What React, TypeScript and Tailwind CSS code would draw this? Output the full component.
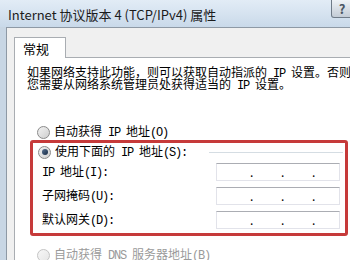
import type { ReactNode } from "react";

const cjk = "font-['Noto_Sans_CJK_SC','Noto_Sans_CJK_JP',sans-serif]";

// Latin runs in the dialog are monospaced half-width glyphs (6px at 12px size)
function M({ children }: { children: ReactNode }) {
  return (
    <span className="font-['Liberation_Mono',monospace] leading-none tracking-[-1.2px]">
      {children}
    </span>
  );
}

function Radio({ checked, disabled }: { checked?: boolean; disabled?: boolean }) {
  return (
    <span
      className={`flex h-[13px] w-[13px] shrink-0 items-center justify-center rounded-full border ${
        disabled
          ? "border-[#c4c4c4] bg-gradient-to-br from-[#f7f7f7] to-[#e6e6e6]"
          : "border-[#8a8a8a] bg-gradient-to-br from-[#f2f2f2] to-[#cfcfcf]"
      }`}
    >
      {checked && (
        <span className="h-[6px] w-[6px] rounded-full bg-gradient-to-br from-[#5a7291] to-[#152a45]" />
      )}
    </span>
  );
}

function IpBox() {
  return (
    <div className="flex h-[18px] w-[124px] items-end border border-[#e2e3ea] border-t-[#abadb3] bg-white pb-[2px] text-[12px] leading-[12px] text-black">
      <span className="w-[33px]" />
      <span className="w-[31px]">.</span>
      <span className="w-[31px]">.</span>
      <span>.</span>
    </div>
  );
}

const fields: { key: string; label: ReactNode }[] = [
  {
    key: "ip",
    label: (
      <>
        <M>IP </M>地址<M>(I):</M>
      </>
    ),
  },
  {
    key: "mask",
    label: (
      <>
        子网掩码<M>(U):</M>
      </>
    ),
  },
  {
    key: "gw",
    label: (
      <>
        默认网关<M>(D):</M>
      </>
    ),
  },
];

export default function App() {
  return (
    <div className={`flex h-[260px] w-[350px] flex-col overflow-hidden bg-[#c8d6e4] ${cjk}`}>
      {/* Title bar */}
      <div className="relative flex h-[27px] shrink-0 items-center bg-gradient-to-b from-[#e2ecf6] via-[#d6e3f0] to-[#c9d9e9] pl-[8px] pt-[2px]">
        <span className="text-[13px] leading-none text-[#1b1b1b]">
          Internet 协议版本 4 (TCP/IPv4) 属性
        </span>
        <div className="absolute right-[-3px] top-0 flex h-[18px] w-[22px] items-center justify-center rounded-b-[3px] border border-t-0 border-[#6f7b88] bg-gradient-to-b from-[#eef2f6] to-[#c3ccd6] text-[13px] font-bold leading-none text-[#4a5563]">
          ?
        </div>
      </div>

      {/* Body */}
      <div className="ml-[6px] flex flex-1 flex-col border-l border-t border-[#8e99a5] bg-[#f0f0f0] pl-[7px] pt-[9px]">
        {/* Tab */}
        <div className="relative z-10 -mb-px flex h-[21px] w-[52px] items-center border border-b-0 border-[#a9adb2] bg-white pl-[8px] text-[13px] leading-none text-black">
          常规
        </div>

        {/* Tab panel */}
        <div className="flex flex-1 flex-col border-l border-t border-[#a9adb2] bg-white pt-[8px] text-[12px] text-black">
          <div className="h-[12px] whitespace-nowrap pl-[12px] leading-[12px]">
            如果网络支持此功能，则可以获取自动指派的<M>{"\u00a0IP\u00a0"}</M>设置。否则
          </div>
          <div className="h-[12px] whitespace-nowrap pl-[12px] leading-[12px]">
            您需要从网络系统管理员处获得适当的<M>{"\u00a0IP\u00a0"}</M>设置。
          </div>

          <div className="ml-[22px] mt-[34px] flex h-[16px] items-center gap-[4px] leading-none">
            <Radio />
            <span>
              自动获得<M> IP </M>地址<M>(O)</M>
            </span>
          </div>

          {/* Red annotation frame */}
          <div className="ml-[15px] flex w-[318px] flex-col rounded-[3px] border-[3px] border-[#c63a3a] pb-[4px] pt-[1px]">
            <div className="flex h-[16px] items-center pl-[5px] leading-none">
              <Radio checked />
              <span className="ml-[4px]">
                使用下面的<M> IP </M>地址<M>(S):</M>
              </span>
              <span className="ml-[22px] mr-[2px] h-px flex-1 bg-[#d5dde3]" />
            </div>
            <div className="mt-[3px] flex flex-col gap-[6px]">
              {fields.map((f) => (
                <div key={f.key} className="flex items-center pl-[9px] leading-none">
                  <span className="w-[174px]">{f.label}</span>
                  <IpBox />
                </div>
              ))}
            </div>
          </div>

          <div className="ml-[22px] mt-[11px] flex h-[16px] items-center gap-[4px] leading-none text-[#9a9a9a]">
            <Radio disabled />
            <span>
              自动获得<M> DNS </M>服务器地址<M>(B)</M>
            </span>
          </div>
        </div>
      </div>
    </div>
  );
}
